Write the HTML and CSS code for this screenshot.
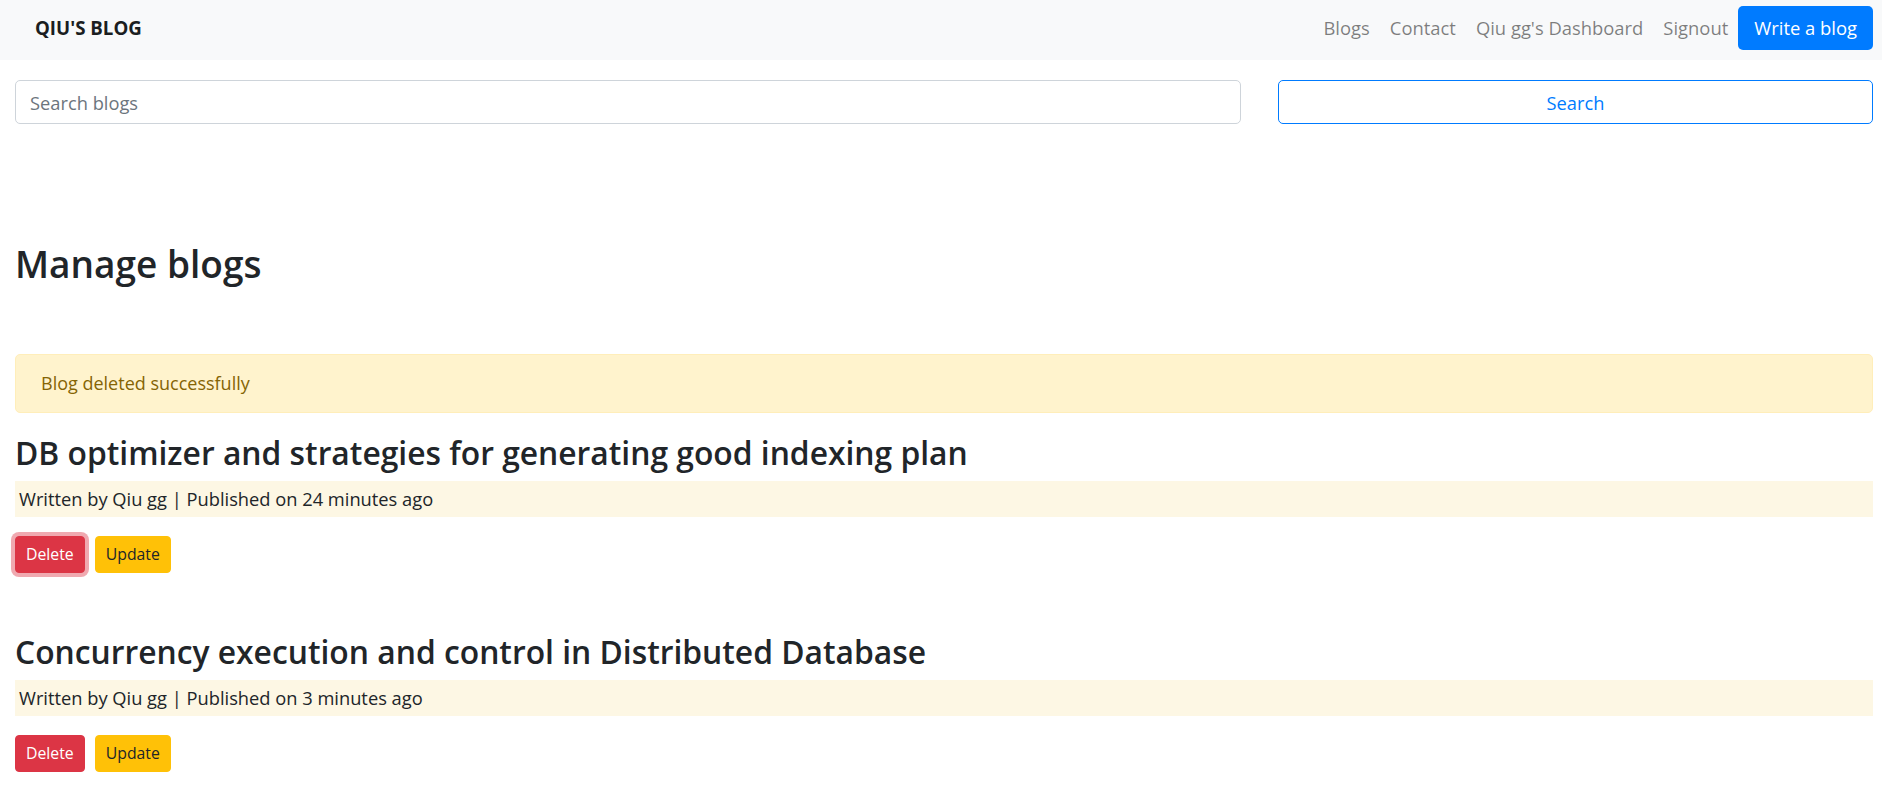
FILE: index.html
```html
<!DOCTYPE html>
<html lang="en">
<head>
<meta charset="utf-8">
<title>Manage blogs - Qiu's Blog</title>
<link rel="stylesheet" href="styles.css">
</head>
<body>
<nav class="navbar">
  <a class="brand" href="#">QIU'S BLOG</a>
  <ul class="nav">
    <li><a class="nav-link" href="#">Blogs</a></li>
    <li><a class="nav-link" href="#">Contact</a></li>
    <li><a class="nav-link" href="#">Qiu gg's Dashboard</a></li>
    <li><a class="nav-link" href="#">Signout</a></li>
    <li><a class="btn-write" href="#">Write a blog</a></li>
  </ul>
</nav>
<main class="page">
  <form class="search-row">
    <input class="search-input" type="text" placeholder="Search blogs">
    <button class="search-btn" type="button">Search</button>
  </form>
  <h2 class="page-title">Manage blogs</h2>
  <div class="alert">Blog deleted successfully</div>
  <article class="post">
    <h3 class="post-title">DB optimizer and strategies for generating good indexing plan</h3>
    <p class="post-meta">Written by Qiu gg | Published on 24 minutes ago</p>
    <div class="post-actions">
      <button class="btn-sm btn-danger is-focused" type="button">Delete</button>
      <button class="btn-sm btn-warning" type="button">Update</button>
    </div>
  </article>
  <article class="post">
    <h3 class="post-title">Concurrency execution and control in Distributed Database</h3>
    <p class="post-meta">Written by Qiu gg | Published on 3 minutes ago</p>
    <div class="post-actions">
      <button class="btn-sm btn-danger" type="button">Delete</button>
      <button class="btn-sm btn-warning" type="button">Update</button>
    </div>
  </article>
</main>
</body>
</html>
```

FILE: styles.css
```css
* { box-sizing: border-box; }

html, body {
  margin: 0;
  padding: 0;
  background: #fff;
}

body {
  font-family: "Open Sans", "Noto Sans", "DejaVu Sans", sans-serif;
  font-size: 18px;
  color: #212529;
}

a { text-decoration: none; }

/* ---------- navbar ---------- */
.navbar {
  height: 60px;
  background: #f8f9fa;
  display: flex;
  align-items: center;
  justify-content: space-between;
  padding: 0 9px 4px 35px;
}

.brand {
  font-size: 18.7px;
  font-weight: 700;
  color: #1b1e21;
  line-height: 28px;
}

.nav {
  list-style: none;
  margin: 0;
  padding: 0;
  display: flex;
  align-items: center;
}

.nav-link {
  display: block;
  padding: 0 10px;
  font-size: 18.4px;
  line-height: 28px;
  color: rgba(0, 0, 0, 0.5);
}

.btn-write {
  display: block;
  height: 44px;
  line-height: 44px;
  padding: 0 16px;
  background: #007bff;
  color: #fff;
  font-size: 18.4px;
  border-radius: 5px;
}

/* ---------- page ---------- */
.page {
  padding: 20px 9px 0 15px;
}

.search-row {
  display: grid;
  grid-template-columns: 1226px 1fr;
  column-gap: 37px;
  margin: 0;
}

.search-input {
  height: 44px;
  border: 1px solid #ced4da;
  border-radius: 5px;
  padding: 0 14px;
  font-family: inherit;
  font-size: 18.3px;
  color: #495057;
  background: #fff;
  outline: none;
}

.search-input::placeholder { color: #6c757d; }

.search-btn {
  height: 44px;
  border: 1px solid #007bff;
  border-radius: 5px;
  background: #fff;
  color: #007bff;
  font-family: inherit;
  font-size: 18.3px;
}

.page-title {
  margin: 116px 0 66px;
  font-size: 37px;
  font-weight: 600;
  line-height: 48px;
  color: #212529;
}

.alert {
  padding: 14px 25px;
  line-height: 29px;
  border: 1px solid #ffeeba;
  border-radius: 5px;
  background: #fff3cd;
  color: #856404;
  margin-bottom: 20px;
}

.post { margin-bottom: 59px; }
.post:last-child { margin-bottom: 0; }

.post-title {
  margin: 0 0 8px;
  font-size: 31.8px;
  font-weight: 600;
  line-height: 40px;
  color: #212529;
}

.post-meta {
  margin: 0 0 19px;
  padding: 4px;
  font-size: 18.3px;
  line-height: 28px;
  background: #fdf7e4;
}

.post-actions {
  display: flex;
  gap: 10px;
}

.btn-sm {
  height: 37px;
  padding: 0 10px;
  border: 1px solid transparent;
  border-radius: 4px;
  font-family: inherit;
  font-size: 15.8px;
  line-height: 35px;
}

.btn-danger {
  background: #dc3545;
  border-color: #dc3545;
  color: #fff;
}

.btn-danger.is-focused {
  box-shadow: 0 0 0 4px rgba(225, 83, 97, 0.5);
}

.btn-warning {
  background: #ffc107;
  border-color: #ffc107;
  color: #212529;
}
```
